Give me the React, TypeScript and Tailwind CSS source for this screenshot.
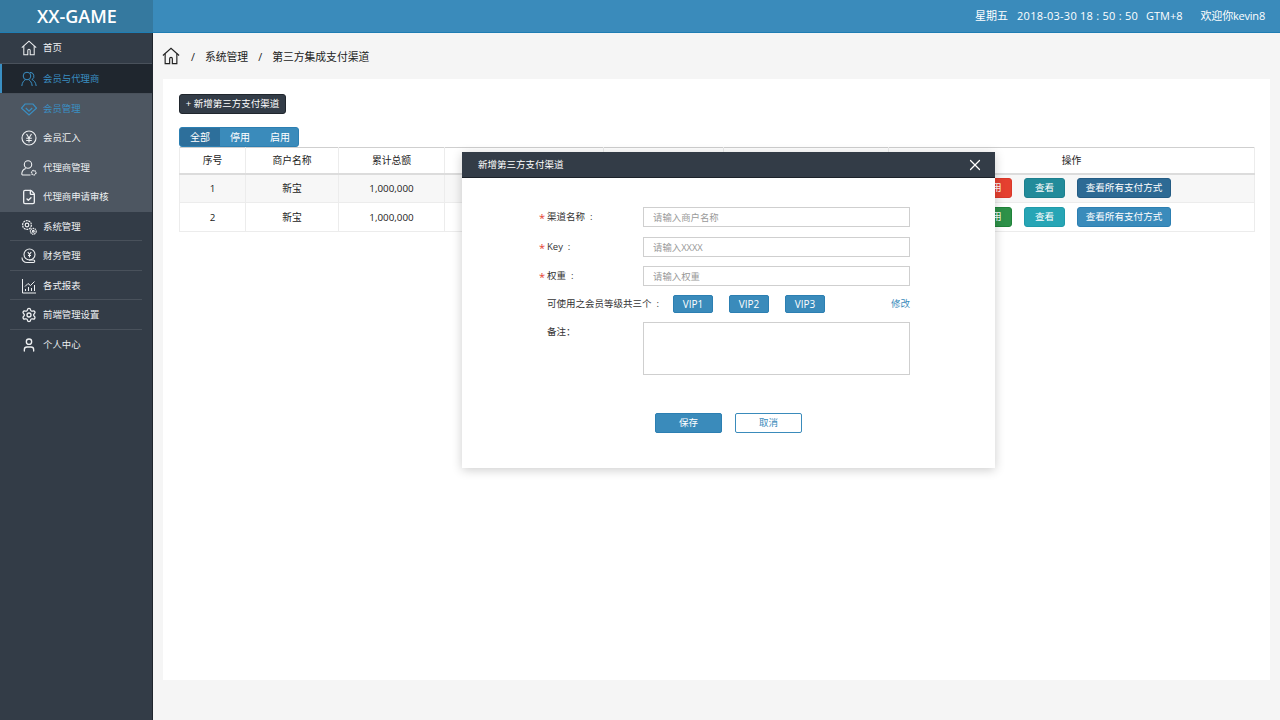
import { FileCheck, Settings, User, X } from 'lucide-react'

const font = 'font-["Open_Sans","Noto_Sans_CJK_SC",sans-serif]'

const HomeIcon = ({ className }: { className?: string }) => (
  <svg viewBox="0 0 20 20" fill="none" stroke="currentColor" strokeWidth="1.3" className={className}>
    <path d="M1 9.500 10 1.500l9 8" />
    <path d="M3.500 7.500V18.500h5v-5.500a1.500 1.500 0 0 1 3 0v5.500h5V7.500" />
  </svg>
)

const UsersIcon = ({ className }: { className?: string }) => (
  <svg viewBox="0 0 16 16" fill="none" stroke="currentColor" strokeWidth="1" className={className}>
    <circle cx="6" cy="5" r="3.800" />
    <path d="M.8 15c.3-3.500 2-5.500 3.700-6.300M7.500 8.700c1.700.8 3.400 2.800 3.700 6.300" />
    <path d="M9 1.400A3.800 3.800 0 0 1 11 8.500c2 .8 3.800 3 4.200 6.500" />
  </svg>
)

const GemIcon = ({ className }: { className?: string }) => (
  <svg viewBox="0 0 16 16" fill="none" stroke="currentColor" strokeWidth="1.2" className={className}>
    <path d="M4 3h8l3.500 4.200L8 14 .5 7.200z" />
    <path d="M4.800 7 8 10.200 11.200 7" />
  </svg>
)

const YenIcon = ({ className }: { className?: string }) => (
  <svg viewBox="0 0 16 16" fill="none" stroke="currentColor" strokeWidth="1.1" className={className}>
    <circle cx="8" cy="8" r="7" />
    <path d="m5.500 4 2.500 4 2.500-4M8 8v4.500M5.200 8.300h5.600M5.200 10.500h5.600" />
  </svg>
)

const UserGearIcon = ({ className }: { className?: string }) => (
  <svg viewBox="0 0 16 16" fill="none" stroke="currentColor" strokeWidth="1.1" className={className}>
    <circle cx="7" cy="4.500" r="3.700" />
    <path d="M9.500 15H2a1.200 1.200 0 0 1-1.200-1.300C1 11 2.500 9.200 4.800 8.500" />
    <circle cx="12.700" cy="12.700" r="2.200" strokeDasharray="1.400 0.600" strokeWidth="1.300" />
  </svg>
)

const CogsIcon = ({ className }: { className?: string }) => (
  <svg viewBox="0 0 16 16" fill="none" stroke="currentColor" strokeWidth="1.200" className={className}>
    <circle cx="6" cy="6" r="4.400" strokeDasharray="2 0.700" />
    <circle cx="6" cy="6" r="1.800" />
    <circle cx="12.300" cy="12.300" r="2.900" strokeDasharray="1.500 0.600" />
    <circle cx="12.300" cy="12.300" r="0.900" />
  </svg>
)

const CoinHandIcon = ({ className }: { className?: string }) => (
  <svg viewBox="0 0 16 16" fill="none" stroke="currentColor" strokeWidth="1.1" className={className}>
    <circle cx="8.500" cy="6.500" r="5.500" />
    <path d="m6.800 4 1.700 2.500L10.200 4M8.500 6.500v3M7 7.500h3" />
    <path d="M1 9.500c0 3 2 5 5 5h6.500a1.200 1.200 0 0 0 0-2.500H8" />
  </svg>
)

const ChartIcon = ({ className }: { className?: string }) => (
  <svg viewBox="0 0 16 16" fill="none" stroke="currentColor" strokeWidth="1" className={className}>
    <path d="M1.500 1v14H15" />
    <path d="M4 8.500 7 5.500 9.500 7.500 13.500 3.500" />
    <path d="M4.500 13v-2M7.500 13V9M10.500 13v-3M13.500 13V7" />
  </svg>
)

interface MenuItem {
  label: string
  icon: React.ComponentType<{ className?: string }>
}

const NavRow = ({ item, active, divider }: { item: MenuItem; active?: boolean; divider?: boolean }) => {
  const Icon = item.icon
  return (
    <div className={`relative flex items-center gap-[6px] pl-[21px] pt-px h-[29.500px] text-[9.400px] ${active ? 'text-[#3a8fc3]' : 'text-[#eef0f2]'}`}>
      <Icon className="h-[16px] w-[16px] shrink-0" />
      <span>{item.label}</span>
      {divider && <div className="absolute left-[10px] right-[10px] bottom-0 h-px bg-[#49515b]" />}
    </div>
  )
}

const ActionBtn = ({ className, children, w }: { className: string; children: React.ReactNode; w: string }) => (
  <button className={`h-[20px] rounded-[3px] border text-[9.600px] text-white ${w} ${className}`}>{children}</button>
)

const TableRow = ({ no, striped, first }: { no: number; striped?: boolean; first?: boolean }) => (
  <tr className={`h-[29px] text-center text-[9.800px] text-[#222] border-b border-[#ececec] ${striped ? 'bg-[#f7f7f7]' : 'bg-white'}`}>
    <td className="border-l border-r border-[#ececec] pt-[2px]">{no}</td>
    <td className="border-r border-[#ececec] pt-[2px]">新宝</td>
    <td className="border-r border-[#ececec] pt-[2px]">1,000,000</td>
    <td className="border-r border-[#ececec]"></td>
    <td className="border-r border-[#ececec]"></td>
    <td className="border-r border-[#ececec]"></td>
    <td className="border-r border-[#ececec] pl-[83px]">
      <div className="flex items-center gap-3">
        {first ? (
          <ActionBtn w="w-[40px]" className="bg-[#e5402f] border-[#d9382a]">停用</ActionBtn>
        ) : (
          <ActionBtn w="w-[40px]" className="bg-[#2d9148] border-[#1f8239]">启用</ActionBtn>
        )}
        {first ? (
          <ActionBtn w="w-[41px]" className="bg-[#228b9a] border-[#1d7f8d]">查看</ActionBtn>
        ) : (
          <ActionBtn w="w-[41px]" className="bg-[#27a5b5] border-[#1f9aa9]">查看</ActionBtn>
        )}
        {first ? (
          <ActionBtn w="w-[94px]" className="bg-[#2d6a94] border-[#245c84]">查看所有支付方式</ActionBtn>
        ) : (
          <ActionBtn w="w-[94px]" className="bg-[#3a8bbb] border-[#2c7fb2]">查看所有支付方式</ActionBtn>
        )}
      </div>
    </td>
  </tr>
)

const FormRow = ({ label, placeholder, className }: { label: string; placeholder: string; className?: string }) => (
  <div className={`flex items-center h-[20px] ${className ?? ''}`}>
    <span className="w-[8px] pt-[2px] text-[11px] text-[#e5402f]">*</span>
    <span className="w-[96px] whitespace-pre text-[9.500px] text-[#333]">{label}</span>
    <input
      placeholder={placeholder}
      className="h-[20px] flex-1 border border-[#cfcfcf] px-[9px] text-[9.400px] outline-none placeholder:text-[#999]"
    />
  </div>
)

const VipBtn = ({ label }: { label: string }) => (
  <button className="h-[18px] w-[40px] rounded-[2px] border border-[#2c7fb2] bg-[#3a8bbb] text-[10px] text-white">{label}</button>
)

export default function App() {
  return (
    <div className={`${font} flex h-[720px] w-[1280px] flex-col overflow-hidden bg-[#f5f5f5]`}>
      <header className="flex h-[33px] shrink-0 items-stretch border-b border-[#1f7db3] bg-[#3a8bbb]">
        <div className="flex w-[153px] items-center justify-center bg-[#35799f] pl-px text-[18px] font-semibold text-white">XX-GAME</div>
        <div className="flex flex-1 items-center justify-end pr-[15px] text-[11px] text-white">
          <span>星期五</span>
          <span className="ml-[9px] whitespace-pre tracking-[0.25px]">2018-03-30 18 : 50 : 50</span>
          <span className="ml-[8px]">GTM+8</span>
          <span className="ml-[18px] tracking-[-0.2px]">欢迎你kevin8</span>
        </div>
      </header>

      <div className="flex min-h-0 flex-1">
        <aside className="w-[153px] shrink-0 border-r border-[#20262d] bg-[#333c47]">
          <NavRow item={{ label: '首页', icon: HomeIcon }} />
          <div className="relative h-[30px] border-t border-[#49515b] bg-[#1f262e]">
            <div className="absolute left-0 top-0 bottom-0 w-[2px] bg-[#3a8fc3]" />
            <NavRow item={{ label: '会员与代理商', icon: UsersIcon }} active />
          </div>
          <div className="border-t border-[#49515b] bg-[#4d5661]">
            <NavRow item={{ label: '会员管理', icon: GemIcon }} active />
            <NavRow item={{ label: '会员汇入', icon: YenIcon }} />
            <NavRow item={{ label: '代理商管理', icon: UserGearIcon }} />
            <NavRow item={{ label: '代理商申请审核', icon: FileCheck }} />
          </div>
          <NavRow item={{ label: '系统管理', icon: CogsIcon }} divider />
          <NavRow item={{ label: '财务管理', icon: CoinHandIcon }} divider />
          <NavRow item={{ label: '各式报表', icon: ChartIcon }} divider />
          <NavRow item={{ label: '前端管理设置', icon: Settings }} divider />
          <NavRow item={{ label: '个人中心', icon: User }} />
        </aside>

        <main className="relative min-w-0 flex-1 px-[10px] pb-[40px]">
          <div className="flex h-[46px] items-center gap-[10px] pt-[2px] text-[10.800px] text-[#222]">
            <HomeIcon className="-ml-px mb-[3px] mr-px h-[18px] w-[18px] text-[#222]" />
            <span>/</span>
            <span>系统管理</span>
            <span>/</span>
            <span>第三方集成支付渠道</span>
          </div>

          <section className="h-[601px] bg-white px-4 pt-[15px]">
            <button className="block h-[20px] w-[107px] rounded-[3px] border border-[#20262d] bg-[#333c47] text-[9.500px] text-white">+ 新增第三方支付渠道</button>

            <div className="mt-[13px] flex h-[20px] w-[120px] overflow-hidden rounded-[3px] border border-[#2c7fb2] bg-[#3a8bbb] text-[10px] text-white">
              <span className="flex w-[40px] shrink-0 items-center justify-center bg-[#2d6f9b]">全部</span>
              <span className="flex w-[40px] shrink-0 items-center justify-center">停用</span>
              <span className="flex w-[40px] shrink-0 items-center justify-center">启用</span>
            </div>

            <table className="w-[1075px] table-fixed border-collapse">
              <colgroup>
                <col className="w-[66px]" />
                <col className="w-[93px]" />
                <col className="w-[106px]" />
                <col className="w-[159px]" />
                <col className="w-[120px]" />
                <col className="w-[165px]" />
                <col className="w-[366px]" />
              </colgroup>
              <thead>
                <tr className="h-[26px] border-t border-b-2 border-t-[#cfcfcf] border-b-[#dcdcdc] text-center text-[9.800px] text-[#222]">
                  <th className="border-l border-r border-[#ececec] pt-[2px] font-normal">序号</th>
                  <th className="border-r border-[#ececec] pt-[2px] font-normal">商户名称</th>
                  <th className="border-r border-[#ececec] pt-[2px] font-normal">累计总额</th>
                  <th className="border-r border-[#ececec] font-normal"></th>
                  <th className="border-r border-[#ececec] font-normal"></th>
                  <th className="border-r border-[#ececec] font-normal"></th>
                  <th className="border-r border-[#ececec] pt-[2px] font-normal">操作</th>
                </tr>
              </thead>
              <tbody>
                <TableRow no={1} striped first />
                <TableRow no={2} />
              </tbody>
            </table>
          </section>

          <div className="absolute left-[309px] top-[119px] h-[316px] w-[533px] bg-white shadow-[0_2px_10px_rgba(0,0,0,0.2)]">
            <div className="flex h-[26px] items-center justify-between border-b border-[#1c2229] bg-[#333c47] pl-[16px] pr-[11px] pt-px text-[9.500px] text-white">
              <span>新增第三方支付渠道</span>
              <X className="h-[18px] w-[18px]" strokeWidth={1.6} />
            </div>
            <div className="pl-[77px] pr-[85px] pt-[29px]">
              <FormRow label="渠道名称  :" placeholder="请输入商户名称" />
              <FormRow label="Key  :" placeholder="请输入XXXX" className="mt-[10px]" />
              <FormRow label="权重  :" placeholder="请输入权重" className="mt-[9px]" />
              <div className="mt-[9px] flex h-[18px] items-center pl-[8px] text-[9.500px] text-[#333]">
                <span className="w-[126px] whitespace-pre">可使用之会员等级共三个  :</span>
                <div className="flex gap-4">
                  <VipBtn label="VIP1" />
                  <VipBtn label="VIP2" />
                  <VipBtn label="VIP3" />
                </div>
                <span className="ml-auto text-[#3a8bbb]">修改</span>
              </div>
              <div className="mt-[9px] flex">
                <span className="w-[104px] pl-[8px] pt-[3px] text-[9.500px] text-[#333]">备注：</span>
                <textarea className="h-[53px] flex-1 resize-none border border-[#cfcfcf] outline-none" />
              </div>
              <div className="mt-[38px] flex gap-[13px] pl-[116px]">
                <button className="h-[20px] w-[67px] rounded-[2px] border border-[#2c7fb2] bg-[#3a8bbb] text-[9.500px] text-white">保存</button>
                <button className="h-[20px] w-[67px] rounded-[2px] border border-[#3a8bbb] bg-white text-[9.500px] text-[#3a8bbb]">取消</button>
              </div>
            </div>
          </div>
        </main>
      </div>
    </div>
  )
}
